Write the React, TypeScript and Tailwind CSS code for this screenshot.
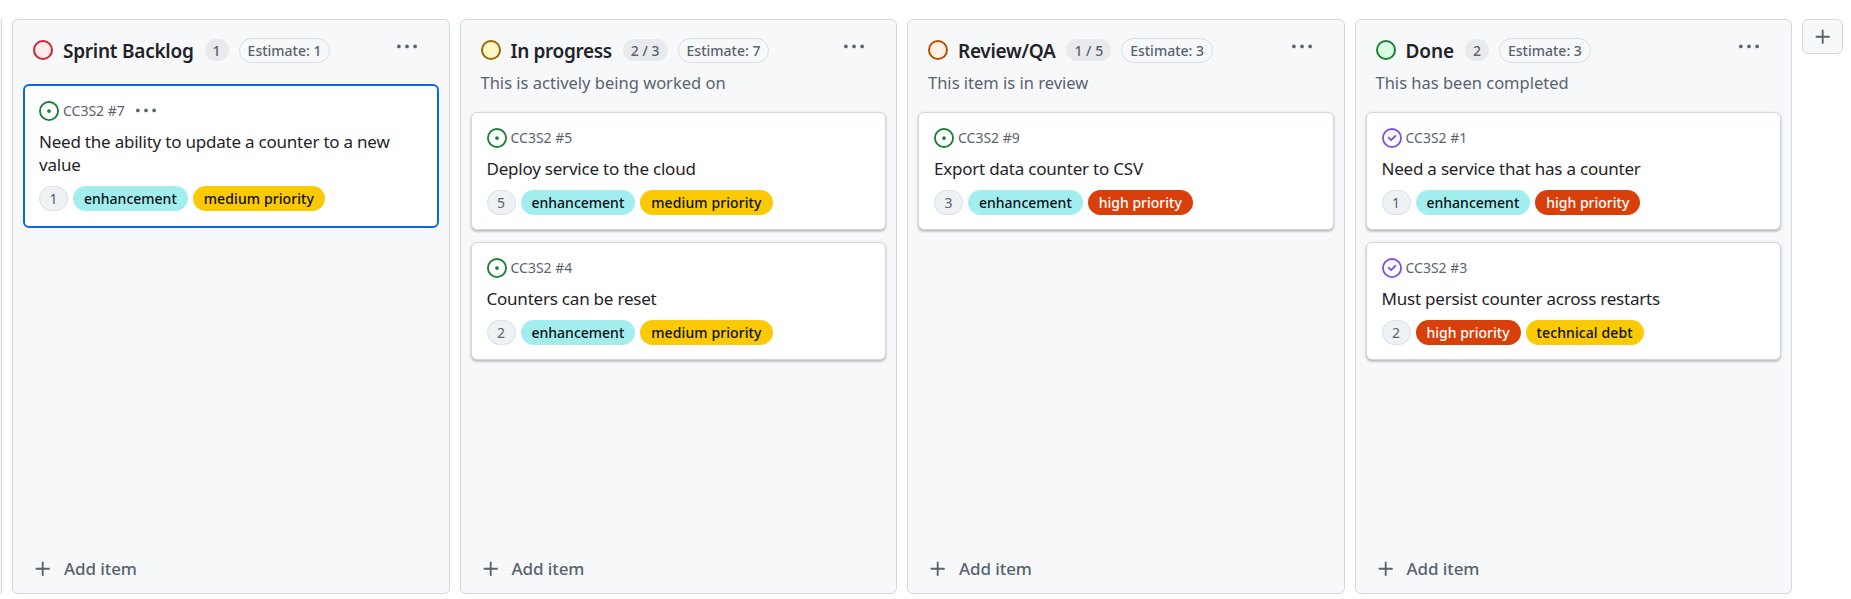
import React from "react";

const font = { fontFamily: '"Noto Sans", "Open Sans", sans-serif' };

function Dots({ className = "" }: { className?: string }) {
  return (
    <svg width="20" height="20" viewBox="0 0 16 16" fill="currentColor" className={`shrink-0 ${className}`}>
      <path d="M8 9a1.5 1.5 0 1 0 0-3 1.5 1.5 0 0 0 0 3ZM1.5 9a1.5 1.5 0 1 0 0-3 1.5 1.5 0 0 0 0 3Zm13 0a1.5 1.5 0 1 0 0-3 1.5 1.5 0 0 0 0 3Z" />
    </svg>
  );
}

function Plus({ size = 20 }: { size?: number }) {
  return (
    <svg width={size} height={size} viewBox="0 0 16 16" fill="currentColor" className="shrink-0">
      <path d="M7.75 2a.75.75 0 0 1 .75.75V7h4.25a.75.75 0 0 1 0 1.5H8.5v4.25a.75.75 0 0 1-1.5 0V8.5H2.75a.75.75 0 0 1 0-1.5H7V2.75A.75.75 0 0 1 7.75 2Z" />
    </svg>
  );
}

function IssueIcon({ done }: { done: boolean }) {
  if (done) {
    return (
      <svg width="20" height="20" viewBox="0 0 16 16" fill="#8250df" className="shrink-0">
        <path d="M11.28 6.78a.75.75 0 0 0-1.06-1.06L7.25 8.69 5.78 7.22a.75.75 0 0 0-1.06 1.06l2 2a.75.75 0 0 0 1.06 0l3.5-3.5Z" />
        <path d="M16 8A8 8 0 1 1 0 8a8 8 0 0 1 16 0Zm-1.5 0a6.5 6.5 0 1 0-13 0 6.5 6.5 0 0 0 13 0Z" />
      </svg>
    );
  }
  return (
    <svg width="20" height="20" viewBox="0 0 16 16" fill="#1a7f37" className="shrink-0">
      <path d="M8 9.5a1.5 1.5 0 1 0 0-3 1.5 1.5 0 0 0 0 3Z" />
      <path d="M8 0a8 8 0 1 1 0 16A8 8 0 0 1 8 0ZM1.5 8a6.5 6.5 0 1 0 13 0 6.5 6.5 0 0 0-13 0Z" />
    </svg>
  );
}

function Label({ name }: { name: string }) {
  if (name === "enhancement") {
    return <span className="flex h-[25px] items-center rounded-full bg-[#a2eeef] px-[11px] text-[14px] font-medium text-[#0b1016]">{name}</span>;
  }
  if (name === "high priority") {
    return <span className="flex h-[25px] items-center rounded-full bg-[#d93f0b] px-[11px] text-[14px] font-medium text-white">{name}</span>;
  }
  return <span className="flex h-[25px] items-center rounded-full bg-[#fbca04] px-[11px] text-[14px] font-medium tracking-[0.1px] text-[#0b1016]">{name}</span>;
}

type CardData = { num: number; title: string; est: number; labels: string[]; done?: boolean; selected?: boolean };

function Card({ c }: { c: CardData }) {
  const outer = c.selected
    ? "rounded-[6px] border-2 border-[#0969da] bg-white px-[14px] pt-[15px] pb-[15px]"
    : "rounded-[6px] border border-[#d0d7de] bg-white px-[15px] pt-[15px] pb-[14px] shadow-[0_1px_3px_rgba(31,35,40,0.2),0_2px_2px_rgba(31,35,40,0.14)]";
  return (
    <div className={outer}>
      <div className="flex h-[20px] items-center gap-[4px] text-[14px] text-[#59636e]">
        <IssueIcon done={!!c.done} />
        <span className="-mt-[2px]">CC3S2 #{c.num}</span>
        {c.selected && <Dots className="ml-[7px] text-[#59636e]" />}
      </div>
      <div className="mt-[9px] text-[17px] leading-[23px] tracking-[-0.22px] text-[#1f2328]">{c.title}</div>
      <div className="mt-[10px] flex items-center gap-[5px]">
        <span className="flex h-[25px] items-center justify-center rounded-full border border-[#d8dee4] bg-[#eff2f5] px-[9.5px] text-[14px] text-[#59636e]">{c.est}</span>
        {c.labels.map((l) => <Label key={l} name={l} />)}
      </div>
    </div>
  );
}

type ColData = {
  title: string; ring: string; fill: string; count: string; estimate: number; titleClass: string; desc?: string; cards: CardData[];
};

const cols: ColData[] = [
  { title: "Sprint Backlog", ring: "#cf222e", fill: "#ffebe9", count: "1", estimate: 1, titleClass: "tracking-[-0.25px]", cards: [
    { num: 7, title: "Need the ability to update a counter to a new value", est: 1, labels: ["enhancement", "medium priority"], selected: true },
  ] },
  { title: "In progress", ring: "#9a6700", fill: "#fff8c5", count: "2 / 3", estimate: 7, titleClass: "tracking-[-0.35px]", desc: "This is actively being worked on", cards: [
    { num: 5, title: "Deploy service to the cloud", est: 5, labels: ["enhancement", "medium priority"] },
    { num: 4, title: "Counters can be reset", est: 2, labels: ["enhancement", "medium priority"] },
  ] },
  { title: "Review/QA", ring: "#bc4c00", fill: "#fff1e5", count: "1 / 5", estimate: 3, titleClass: "tracking-[-0.3px]", desc: "This item is in review", cards: [
    { num: 9, title: "Export data counter to CSV", est: 3, labels: ["enhancement", "high priority"] },
  ] },
  { title: "Done", ring: "#1a7f37", fill: "#dafbe1", count: "2", estimate: 3, titleClass: "tracking-[-0.1px]", desc: "This has been completed", cards: [
    { num: 1, title: "Need a service that has a counter", est: 1, labels: ["enhancement", "high priority"], done: true },
    { num: 3, title: "Must persist counter across restarts", est: 2, labels: ["high priority", "technical debt"], done: true },
  ] },
];

function Column({ col }: { col: ColData }) {
  return (
    <div className="flex h-[575px] w-[437.5px] shrink-0 flex-col rounded-[6px] border border-[#d0d7de] bg-[#f6f8fa]">
      <div className="mt-[18px] flex h-[24px] items-center px-[20px]">
        <svg width="20" height="20" viewBox="0 0 20 20" className="shrink-0">
          <circle cx="10" cy="10" r="9" fill={col.fill} stroke={col.ring} strokeWidth="2" />
        </svg>
        <span className={`ml-[10px] mt-[3px] text-[19px] font-semibold text-[#1f2328] ${col.titleClass}`}>{col.title}</span>
        <span className="ml-[11px] flex h-[22px] min-w-[23px] items-center justify-center rounded-full bg-[#e8eaed] px-[8px] text-[14px] font-medium text-[#59636e]">{col.count}</span>
        <span className="ml-[10px] flex h-[25px] items-center rounded-full border border-[#d8dee4] px-[8px] text-[14px] font-medium text-[#59636e]">Estimate: {col.estimate}</span>
        <Dots className="ml-auto mr-[12px] -mt-[7px] text-[#59636e]" />
      </div>
      {col.desc && <div className="mt-[9px] px-[20px] text-[16.5px] leading-[24px] text-[#59636e]">{col.desc}</div>}
      <div className={`flex flex-col gap-[12px] px-[10px] ${col.desc ? "mt-[17px]" : "mt-[22px]"}`}>
        {col.cards.map((c) => <Card key={c.num} c={c} />)}
      </div>
      <div className="mt-auto mb-[12px] flex h-[24px] items-center gap-[11px] pl-[20px] text-[#59636e]">
        <Plus />
        <span className="text-[17px] font-medium tracking-[-0.1px]">Add item</span>
      </div>
    </div>
  );
}

export default function App() {
  return (
    <div className="h-[599px] w-[1851px] overflow-hidden bg-white" style={font}>
      <div className="flex items-start gap-[10px] pt-[19px]">
        <div className="h-[575px] w-[2px] shrink-0 rounded-r-[6px] border-r border-[#d0d7de] bg-[#f6f8fa]" />
        {cols.map((c) => <Column key={c.title} col={c} />)}
        <button className="flex h-[35px] w-[41px] shrink-0 items-center justify-center rounded-[6px] border border-[#d0d7de] bg-[#f6f8fa] text-[#59636e]">
          <Plus />
        </button>
      </div>
    </div>
  );
}
